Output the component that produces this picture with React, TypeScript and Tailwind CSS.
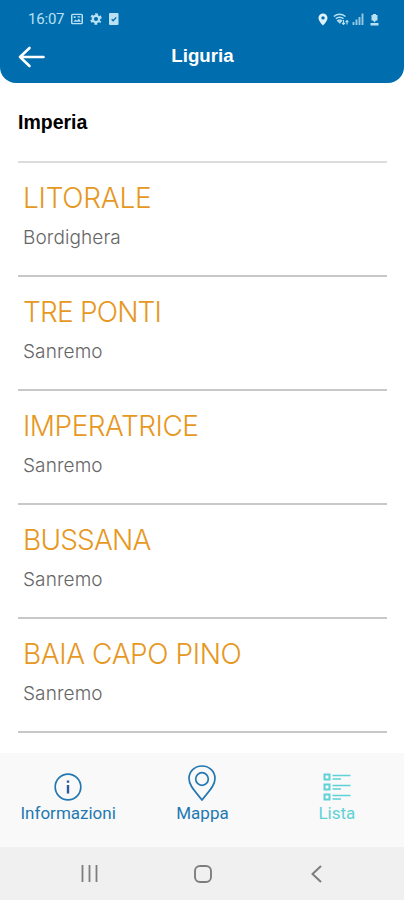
import type { ReactNode } from "react"

const beaches = [
  { name: "LITORALE", city: "Bordighera", spacing: "tracking-[-0.25px]" },
  { name: "TRE PONTI", city: "Sanremo", spacing: "tracking-[-0.8px]" },
  { name: "IMPERATRICE", city: "Sanremo", spacing: "tracking-[-0.5px]" },
  { name: "BUSSANA", city: "Sanremo", spacing: "tracking-[-0.8px]" },
  { name: "BAIA CAPO PINO", city: "Sanremo", spacing: "tracking-[-0.4px]" },
]

const StatusBar = () => (
  <div className="flex h-[38px] items-center justify-between pl-7 pr-[25px] text-[#b9e0f3]">
    <div className="flex items-center">
      <span className="w-[37px] font-[Roboto] text-[15px] tracking-[-0.2px]">16:07</span>
      <svg className="ml-[6px]" width="12" height="12" viewBox="0 0 13 12">
        <rect x="0.8" y="1" width="11.4" height="10" rx="1" fill="none" stroke="currentColor" strokeWidth="1.6" />
        <path d="M2.5 9 5 6.5 6.5 8 8.5 5.5 10.8 9Z M3 3h2v2H3z M7 3h3v1.5H7z" fill="currentColor" />
      </svg>
      <svg className="ml-[7px]" width="12" height="12" viewBox="0 0 12 12">
        <circle cx="6" cy="6" r="3.2" fill="none" stroke="currentColor" strokeWidth="2.2" />
        <circle cx="6" cy="6" r="4.8" fill="none" stroke="currentColor" strokeWidth="2" strokeDasharray="2.6 2.43" strokeDashoffset="1.3" transform="rotate(30 6 6)" />
      </svg>
      <svg className="ml-[7px]" width="10" height="12" viewBox="0 0 10 12">
        <rect width="9.5" height="12" rx="1" fill="currentColor" />
        <path d="m2.7 6.2 1.5 1.6 3-3.4" fill="none" stroke="#006eae" strokeWidth="1.3" />
      </svg>
    </div>
    <div className="flex items-center">
      <svg width="10" height="13" viewBox="0 0 10 13">
        <path d="M5 .5A4.5 4.5 0 0 0 .5 5C.5 8 5 12.5 5 12.5S9.5 8 9.5 5A4.5 4.5 0 0 0 5 .5Z" fill="#dff2fb" />
        <circle cx="5" cy="4.9" r="1.7" fill="#006eae" />
      </svg>
      <svg className="ml-[5px]" width="16" height="13" viewBox="0 0 16 13">
        <path d="M.8 3.5Q6.5-1 12.5 3.5M2.8 5.6Q6.5 2.8 10.5 5.6M4.8 7.6Q6.5 6.5 8.5 7.6L6.8 9.6Z" fill="none" stroke="currentColor" strokeWidth="1.5" />
        <path d="M10.5 7v4.5M9 9.8l1.5 1.7L12 9.8M14 11.500V7.500M12.600 9.200 14 7.500l1.400 1.700" fill="none" stroke="currentColor" strokeWidth="1.1" />
      </svg>
      <svg className="ml-[3px]" width="12" height="12" viewBox="0 0 12 12">
        <path d="M1.5 12V9M4.5 12V6.5M7.5 12V4M10.5 12V.5" stroke="currentColor" strokeWidth="1.9" opacity=".8" />
      </svg>
      <svg className="ml-[6px]" width="9" height="13" viewBox="0 0 9 13">
        <path d="M3 1h3v1h1.5v5.5H6L4.5 9.5 3 7.5H1.5V2H3zM.5 10h8v2.500h-8z" fill="currentColor" />
      </svg>
    </div>
  </div>
)

const Header = () => (
  <header className="h-[83px] shrink-0 rounded-b-2xl bg-[#006eae]">
    <StatusBar />
    <div className="grid h-[37px] grid-cols-[1fr_auto_1fr] items-center px-[18px]">
      <button aria-label="Indietro">
        <svg width="28" height="22" viewBox="0 0 28 22" fill="none" stroke="white" strokeWidth="2.6" strokeLinecap="round" strokeLinejoin="round">
          <path d="M25.5 11H2M11.5 2 2 11l9.5 9" />
        </svg>
      </button>
      <h1 className="pl-px font-['Liberation_Sans'] text-[18.7px] font-bold text-white">Liguria</h1>
    </div>
  </header>
)

const NavItem = ({ label, color, icon }: { label: string; color: string; icon: ReactNode }) => (
  <button className={`flex flex-1 flex-col items-center ${color}`}>
    <span className="flex h-[37px] items-end">{icon}</span>
    <span className="font-[Roboto] text-[17px] leading-[22px]">{label}</span>
  </button>
)

const BottomNav = () => (
  <nav className="flex h-[94px] shrink-0 bg-[#f9f9f9] pl-px pt-3">
    <NavItem
      label="Informazioni"
      color="text-[#2378b1]"
      icon={
        <svg className="mb-px" width="28" height="28" viewBox="0 0 28 28">
          <circle cx="14" cy="14" r="12.8" fill="none" stroke="currentColor" strokeWidth="1.7" />
          <path d="M14 12v8.5M14 7.500v2.300" stroke="#31599e" strokeWidth="2.4" />
        </svg>
      }
    />
    <NavItem
      label="Mappa"
      color="text-[#2378b1]"
      icon={
        <svg className="mb-px" width="28" height="36" viewBox="0 0 28 36" fill="none" stroke="currentColor" strokeWidth="1.7">
          <path d="M14 1C6.5 1 1 6.5 1 13.500c0 6.500 5 11.500 13 21.500 8-10 13-15 13-21.500C27 6.500 21.500 1 14 1Z" />
          <circle cx="14" cy="14" r="6.3" />
        </svg>
      }
    />
    <NavItem
      label="Lista"
      color="text-[#5ed1d5]"
      icon={
        <svg className="mb-px" width="28" height="28" viewBox="0 0 28 28" fill="none" stroke="currentColor">
          <path d="M1.5 1.5h5v5h-5zM1.5 11.5h5v5h-5zM1.5 21.5h5v5h-5z" strokeWidth="2" />
          <path d="M9.5 2.5h18M9.5 6h8.5M9.5 12.5h18M9.5 16h8.5M9.5 22.5h18M9.5 26h8.5" strokeWidth="1.6" />
        </svg>
      }
    />
  </nav>
)

const SystemBar = () => (
  <div className="grid h-[53px] shrink-0 grid-cols-[1fr_18px_1fr] items-center bg-[#f0f0f0] pl-[81px] pr-[82px] text-[#7d7d7d]">
    <svg width="17" height="17" viewBox="0 0 17 17" stroke="currentColor" strokeWidth="1.8">
      <path d="M1.5 0v17M8.5 0v17M15.5 0v17" />
    </svg>
    <svg className="ml-px" width="18" height="18" viewBox="0 0 18 18">
      <rect x="1" y="1" width="16" height="16" rx="5" fill="none" stroke="currentColor" strokeWidth="1.9" />
    </svg>
    <svg className="justify-self-end" width="11" height="18" viewBox="0 0 11 18" fill="none" stroke="currentColor" strokeWidth="2">
      <path d="M10 1 1.5 9l8.5 8" />
    </svg>
  </div>
)

const App = () => {
  return (
    <div className="flex h-[900px] w-[404px] flex-col overflow-hidden bg-white">
      <Header />
      <main className="flex-1 pl-[18px] pr-[17px]">
        <h2 className="flex h-[80px] items-center border-b-2 border-[#dcdcdc] pt-[2px] font-['Liberation_Sans'] text-[19.5px] font-bold text-black">
          Imperia
        </h2>
        <ul>
          {beaches.map((beach) => (
            <li key={beach.name} className="h-[114px] border-b-2 border-[#c8c8c8] pl-[5px] pt-[17px]">
              <p className={`font-[Inter] text-[28px] font-light leading-9 text-[#e6981f] ${beach.spacing}`}>{beach.name}</p>
              <p className="mt-[10px] font-[Inter] text-[19px] font-light leading-6 tracking-[0.1px] text-[#666]">{beach.city}</p>
            </li>
          ))}
        </ul>
      </main>
      <BottomNav />
      <SystemBar />
    </div>
  )
}

export default App
